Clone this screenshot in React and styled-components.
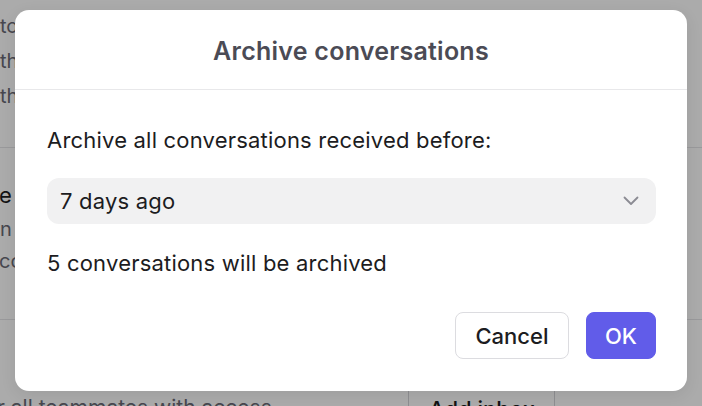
import React from "react";
import styled, { createGlobalStyle } from "styled-components";

const Global = createGlobalStyle`
  html, body { margin: 0; padding: 0; background: #ffffff; }
  body { font-family: Inter, "Noto Sans", sans-serif; overflow: hidden; }
  * { box-sizing: border-box; }
`;

const Page = styled.div`
  width: 702px;
  height: 406px;
  overflow: hidden;
  position: relative;
  background: #ffffff;
  color: #5f5f6a;
`;

const Section = styled.div`
  display: flex;
  flex-direction: column;
  padding-top: ${(p) => p.$pt || 0}px;
  height: ${(p) => p.$h}px;
  border-bottom: ${(p) => (p.$line ? "1px solid #e4e4e7" : "none")};
`;

const BgLine = styled.div`
  font-size: ${(p) => p.$size || 20}px;
  line-height: ${(p) => p.$lh || 35}px;
  color: ${(p) => p.$color || "#6b6b76"};
  white-space: nowrap;
  margin-left: ${(p) => p.$ml || 0}px;
`;

const BottomRow = styled.div`
  display: flex;
  align-items: flex-start;
  padding-top: 62px;
`;

const BottomText = styled.div`
  width: 411px;
  font-size: 21px;
  color: #6b6b76;
  white-space: nowrap;
  margin-left: -3px;
  line-height: 28px;
  padding-top: 12px;
`;

const BgButton = styled.div`
  width: 147px;
  height: 60px;
  border-left: 1px solid #d4d4d8;
  border-right: 1px solid #d4d4d8;
  font-size: 22px;
  font-weight: 500;
  color: #1c1c20;
  padding-left: 20px;
  padding-top: 14px;
  white-space: nowrap;
`;

const Overlay = styled.div`
  position: absolute;
  inset: 0;
  background: rgba(0, 0, 0, 0.33);
`;

const Modal = styled.div`
  position: absolute;
  left: 15px;
  top: 10px;
  width: 672px;
  height: 381px;
  background: #ffffff;
  border-radius: 14px;
  display: flex;
  flex-direction: column;
  box-shadow: 0 4px 16px rgba(0, 0, 0, 0.08);
`;

const Header = styled.div`
  height: 80px;
  border-bottom: 1px solid #e8e8ea;
  display: flex;
  align-items: center;
  justify-content: center;
  padding-top: 3px;
`;

const Title = styled.h2`
  margin: 0;
  font-size: 25px;
  line-height: 30px;
  font-weight: 600;
  letter-spacing: 0.25px;
  color: #4b4b55;
`;

const Body = styled.div`
  flex: 1;
  display: flex;
  flex-direction: column;
  padding: 37px 31px 32px 32px;
`;

const Text = styled.p`
  margin: 0;
  margin-top: ${(p) => p.$mt || 0}px;
  font-size: 22px;
  line-height: 26px;
  letter-spacing: 0.2px;
  color: #1c1c21;
`;

const Select = styled.div`
  margin-top: 25px;
  height: 46px;
  border-radius: 12px;
  background: #f1f1f2;
  display: flex;
  align-items: center;
  justify-content: space-between;
  padding: 0 17px 0 13px;
  font-size: 22px;
  letter-spacing: 0.2px;
  color: #1c1c21;
`;

const Footer = styled.div`
  margin-top: auto;
  display: flex;
  justify-content: flex-end;
  gap: 17px;
`;

const Button = styled.button`
  height: 47px;
  padding: 0 ${(p) => (p.$primary ? 18 : 19.5)}px;
  border-radius: 8px;
  font-family: Inter, "Noto Sans", sans-serif;
  font-size: 22px;
  font-weight: 500;
  cursor: pointer;
  border: 1px solid ${(p) => (p.$primary ? "#615ce9" : "#dcdce0")};
  background: ${(p) => (p.$primary ? "#615ce9" : "#ffffff")};
  color: ${(p) => (p.$primary ? "#ffffff" : "#1c1c21")};
`;

const Chevron = () => (
  <svg width="16" height="10" viewBox="0 0 16 10" fill="none">
    <path d="M1.5 1.5 L8 8 L14.5 1.5" stroke="#8b8b93" strokeWidth="1.8" strokeLinecap="round" strokeLinejoin="round" />
  </svg>
);

export default function App() {
  return (
    <>
      <Global />
      <Page>
        <Section $h={148} $pt={9} $line>
          <BgLine>to the selected inbox</BgLine>
          <BgLine>the teammates</BgLine>
          <BgLine>that have access</BgLine>
        </Section>
        <Section $h={172} $pt={30} $line>
          <BgLine $size={22} $lh={34} $color="#1c1c21" $ml={-1}>e</BgLine>
          <BgLine $lh={34}>n</BgLine>
          <BgLine $lh={30} $ml={-1}>co</BgLine>
        </Section>
        <BottomRow>
          <BottomText>r all teammates with access</BottomText>
          <BgButton>Add inbox</BgButton>
        </BottomRow>
        <Overlay />
        <Modal>
          <Header>
            <Title>Archive conversations</Title>
          </Header>
          <Body>
            <Text>Archive all conversations received before:</Text>
            <Select>
              <span>7 days ago</span>
              <Chevron />
            </Select>
            <Text $mt={26}>5 conversations will be archived</Text>
            <Footer>
              <Button>Cancel</Button>
              <Button $primary>OK</Button>
            </Footer>
          </Body>
        </Modal>
      </Page>
    </>
  );
}
